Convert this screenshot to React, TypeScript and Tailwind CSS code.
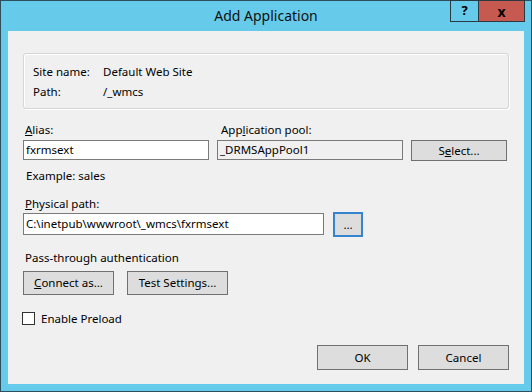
import React from "react";

const font = { fontFamily: '"Noto Sans", "Open Sans", sans-serif' };

const Btn = ({
  children,
  className = "",
}: {
  children: React.ReactNode;
  className?: string;
}) => (
  <button
    className={`border border-[#707070] bg-[#dddddd] text-[11.5px] leading-none text-black flex items-center justify-center ${className}`}
  >
    {children}
  </button>
);

const App = () => {
  return (
    <div
      className="w-[532px] h-[392px] border border-[#2d4f5c] bg-[#66cbea] flex flex-col text-black relative"
      style={font}
    >
      {/* Title bar */}
      <div className="h-[30px] flex items-center justify-center text-[14px] text-[#111] pb-[1px]">
        Add Application
      </div>
      <div className="absolute top-[-1px] right-[6px] flex h-[22px]">
        <div className="w-[29px] border border-[#2b3a40] bg-[#66cbea] flex items-center justify-center text-[13px] font-bold">
          ?
        </div>
        <div className="w-[47px] -ml-px border border-[#2b3a40] bg-[#c75a50] flex items-center justify-center text-[14px] font-bold">
          x
        </div>
      </div>

      {/* Client area */}
      <div className="mx-[7px] h-[353px] bg-[#f0f0f0] px-[15px] pt-[22px] flex flex-col text-[11.5px]">
        {/* Site info */}
        <div className="h-[56px] rounded-[3px] border border-[#d5d5d5] shadow-[inset_1px_1px_0_#ffffff,1px_1px_0_#ffffff] pl-[9px] pt-[8px]">
          <div className="flex h-[20px] items-center">
            <span className="w-[70px]">Site name:</span>
            <span>Default Web Site</span>
          </div>
          <div className="flex h-[20px] items-center">
            <span className="w-[70px]">Path:</span>
            <span>/_wmcs</span>
          </div>
        </div>

        {/* Alias + pool */}
        <div className="mt-[13px] flex items-start">
          <div className="w-[186px]">
            <div className="h-[16px] flex items-center pl-[2px]">
              <span>
                <u>A</u>lias:
              </span>
            </div>
            <div className="mt-[2px] h-[20px] border border-[#7a7a7a] bg-white flex items-center px-[2px]">
              fxrmsext
            </div>
          </div>
          <div className="w-[186px] ml-[8px]">
            <div className="h-[16px] flex items-center pl-[4px]">
              <span>
                App<u>l</u>ication pool:
              </span>
            </div>
            <div className="mt-[2px] h-[20px] border border-[#7a7a7a] bg-[#f0f0f0] flex items-center px-[2px]">
              _DRMSAppPool1
            </div>
          </div>
          <Btn className="w-[96px] h-[21px] ml-[8px] mt-[18px]">
            S<u>e</u>lect...
          </Btn>
        </div>

        <div className="mt-[7px] h-[16px] flex items-center pl-[3px]">
          Example: sales
        </div>

        {/* Physical path */}
        <div className="mt-[12px] h-[16px] flex items-center pl-[2px]">
          <span>
            <u>P</u>hysical path:
          </span>
        </div>
        <div className="flex items-start">
          <div className="mt-[1px] w-[301px] h-[22px] border border-[#7a7a7a] bg-white flex items-center px-[2px]">
            C:\inetpub\wwwroot\_wmcs\fxrmsext
          </div>
          <button className="ml-[9px] w-[30px] h-[25px] border-2 border-[#3584cf] bg-[#dddddd] flex items-center justify-center leading-none">
            ...
          </button>
        </div>

        {/* Pass-through */}
        <div className="mt-[13px] h-[16px] flex items-center pl-[2px]">
          Pass-through authentication
        </div>
        <div className="mt-[5px] flex gap-[13px]">
          <Btn className="w-[91px] h-[24px]">
            <span>
              <u>C</u>onnect as...
            </span>
          </Btn>
          <Btn className="w-[101px] h-[24px]">Test Settings...</Btn>
        </div>

        {/* Preload */}
        <label className="mt-[17px] flex items-center h-[13px]">
          <span className="w-[13px] h-[13px] border border-[#333333] bg-white -ml-[1px]" />
          <span className="ml-[6px]">Enable Preload</span>
        </label>

        {/* Footer buttons */}
        <div className="mt-[20px] flex justify-end gap-[10px]">
          <Btn className="w-[91px] h-[25px]">OK</Btn>
          <Btn className="w-[91px] h-[25px]">Cancel</Btn>
        </div>
      </div>
    </div>
  );
};

export default App;
